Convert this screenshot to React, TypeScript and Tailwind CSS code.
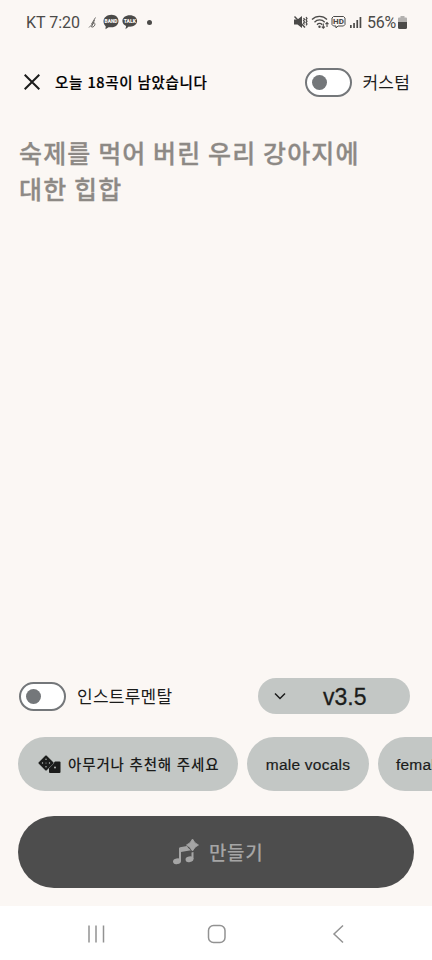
interface ToggleProps {
  label: string;
}

const korean = "font-['Noto_Sans_CJK_KR',sans-serif]";
const latin = "font-['Liberation_Sans','Noto_Sans_CJK_KR',sans-serif]";

function Toggle({ label }: ToggleProps) {
  return (
    <button
      aria-label={label}
      className="w-[47px] h-[29px] shrink-0 rounded-full border-2 border-[#74777a] bg-white flex items-center pl-[5px]"
    >
      <span className="size-[15px] rounded-full bg-[#74777a]" />
    </button>
  );
}

function StatusBar() {
  return (
    <div className="h-11 flex items-center justify-between pl-[26px] pr-[25px] font-['Roboto',sans-serif] text-[#4b4a48] text-base">
      <div className="flex items-center">
        <span className="w-[54px] pt-px whitespace-nowrap">KT 7:20</span>
        <svg className="ml-[8px]" width="10" height="16" viewBox="0 0 10 16" fill="none" stroke="currentColor" strokeWidth="0.8">
          <path d="M7.500 3.500 3.500 10M6.500 6 3.500 13c1.500.8 4-1.500 3.500-3.500C6.500 8.500 5 9 4 10.500M1 13.500l3.500-3.500" />
        </svg>
        <svg className="ml-[5px]" width="17" height="16" viewBox="0 0 17 16">
          <path d="M8.500.7C12.800.7 15.500 3.500 15.500 7s-2.700 6.300-7 6.300H5.500L2.500 15.300l.2-3.100C1.300 11 .5 9.500.5 7.300.5 3.500 4 .7 8.500.7z" fill="currentColor" />
          <text x="8" y="9.200" textAnchor="middle" fontSize="4.800" fontWeight="900" fill="#fbf7f4">BAND</text>
        </svg>
        <svg className="ml-[2px]" width="17" height="16" viewBox="0 0 17 16">
          <path d="M7.800 1.200c4.200 0 7.300 2.400 7.300 5.800s-3.100 5.700-7.300 5.700l-1-.1-3.300 2.600.6-3.300C1.800 11 .4 9.300.4 7c0-3.400 3.200-5.800 7.400-5.800z" fill="currentColor" />
          <text x="7.800" y="9" textAnchor="middle" fontSize="5" fontWeight="900" fill="#fbf7f4">TALK</text>
        </svg>
        <span className="ml-[8px] size-[5px] rounded-full bg-[#4b4a48]" />
      </div>

      <div className="flex items-center">
        <svg width="14" height="14" viewBox="0 0 14 14" fill="none" stroke="currentColor">
          <path d="M0 4.500h3.500L8 1v12L3.500 9.500H0z" fill="currentColor" stroke="none" />
          <path d="M.5 1.500l10.500 11" strokeWidth="1.400" />
          <path d="M9.500 3l1 1.300-1 1.300 1 1.300-1 1.300 1 1.300M12 2l1 1.400-1 1.400 1 1.400-1 1.400 1 1.400-1 1.400" strokeWidth="1.200" />
        </svg>
        <svg className="ml-[3px]" width="19" height="16" viewBox="0 0 19 16" fill="none" stroke="currentColor" strokeWidth="1.300">
          <path d="M1 5.500c4-4.300 11-4.300 15 0M3.500 8.200c2.800-3 7.500-3 10.200 0M6 10.700c1.600-1.700 3.600-1.700 5.200 0" />
          <circle cx="8.500" cy="12.800" r="1.200" fill="currentColor" stroke="none" />
          <path d="M12.300 9.500v4.800M10.800 12.700l1.500 1.600 1.500-1.600M16 13V8.500M14.500 10.200l1.500-1.700 1.500 1.700" strokeWidth="1.100" />
        </svg>
        <svg className="ml-px" width="15" height="14" viewBox="0 0 15 14">
          <path d="M2.500 1.500h10L14 3v6.500L12.500 11H7l-2 2v-2H2.500L1 9.500V3z" fill="none" stroke="currentColor" strokeWidth="1" />
          <text x="7.500" y="9.300" textAnchor="middle" fontSize="8" fontWeight="800" fill="currentColor">HD</text>
        </svg>
        <svg className="ml-[4px]" width="12" height="14" viewBox="0 0 12 14" fill="currentColor">
          <path d="M0 10h1.700v3H0zM3.200 8h1.700v5H3.200zM6.400 5h1.700v8H6.400zM9.600 2h1.700v11H9.600z" />
        </svg>
        <span className="ml-[5px] pt-px w-[29px] tracking-[-0.3px] whitespace-nowrap">56%</span>
        <svg className="ml-[2px]" width="9" height="13" viewBox="0 0 9 13">
          <path d="M2.500 0h4v1.500H8q1 0 1 1V6H0V2.500q0-1 1-1h1.500z" fill="#b3b1af" />
          <path d="M0 6h9v5.500Q9 13 7.500 13h-6Q0 13 0 11.500z" fill="currentColor" />
        </svg>
      </div>
    </div>
  );
}

function Dice() {
  return (
    <svg width="23" height="19" viewBox="0 0 23 19">
      <path d="M17 6.500h4.500a1 1 0 0 1 1 1V17a1 1 0 0 1-1 1h-9.500a1 1 0 0 1-1-1v-4z" fill="#1b1c1b" />
      <path d="M7.300.6q.7-.7 1.400 0l6.800 6.700q.7.700 0 1.400L8.700 15.400q-.7.700-1.400 0L.6 8.700q-.7-.7 0-1.400z" fill="#1b1c1b" stroke="#c3c7c5" strokeWidth="0.400" />
      <g fill="#c3c7c5">
        <circle cx="8" cy="4.300" r="0.700" />
        <circle cx="4.500" cy="8" r="0.700" />
        <circle cx="8" cy="8" r="0.500" />
        <circle cx="11.500" cy="8" r="0.700" />
        <circle cx="8" cy="11.700" r="0.700" />
        <circle cx="17" cy="12.500" r="0.900" />
      </g>
    </svg>
  );
}

function MusicSparkle() {
  return (
    <svg width="26" height="26" viewBox="0 0 26 26" fill="#a5a5a5">
      <ellipse cx="4" cy="22.300" rx="4" ry="2.800" transform="rotate(-12 4 22.300)" />
      <ellipse cx="16.500" cy="20.300" rx="4" ry="2.800" transform="rotate(-12 16.500 20.300)" />
      <path d="M6 22V9.500q0-1 1-1.200l7-1.300q1 2.500 4 4.300l-10 1.700v9zM18.500 13.500l2-.5v7h-2z" />
      <path d="M19.500 0Q21.300 4.200 25.500 6 21.300 7.800 19.500 12 17.700 7.800 13.500 6 17.700 4.200 19.500 0z" stroke="#a5a5a5" strokeWidth="0.800" strokeLinejoin="round" />
    </svg>
  );
}

export default function App() {
  return (
    <div className={`w-[432px] h-[960px] overflow-hidden flex flex-col bg-[#fbf7f4] text-[#1b1c1b] ${korean}`}>
      <StatusBar />

      <header className="h-[76px] flex items-center pl-6 pr-[22px]">
        <svg width="16" height="16" viewBox="0 0 16 16" fill="none" stroke="#1b1c1b" strokeWidth="2">
          <path d="M.7.700l14.600 14.600M15.300.700.700 15.300" />
        </svg>
        <span className="ml-[15px] text-[14.5px] tracking-[0.65px] [word-spacing:0.5px] font-medium text-black [-webkit-text-stroke:0.2px] whitespace-nowrap">
          오늘 18곡이 남았습니다
        </span>
        <div className="ml-auto flex items-center gap-[10px]">
          <Toggle label="커스텀" />
          <span className="text-[17px] tracking-[0.2px] whitespace-nowrap">커스텀</span>
        </div>
      </header>

      <main className="flex-1 pl-[19px] pt-[14px]">
        <p className="text-[25px] leading-9 tracking-[1.15px] [word-spacing:-0.1px] font-medium text-[#8d8985] [-webkit-text-stroke:0.3px]">
          숙제를 먹어 버린 우리 강아지에
          <br />
          대한 힙합
        </p>
      </main>

      <div className="flex items-center justify-between pl-[19px] pr-[22px] h-9">
        <div className="flex items-center gap-[11px]">
          <Toggle label="인스트루멘탈" />
          <span className="text-[17px] tracking-[0.25px] whitespace-nowrap">인스트루멘탈</span>
        </div>
        <button className="w-[152px] h-9 rounded-full bg-[#c3c7c5] flex items-center pl-4">
          <svg width="12" height="8" viewBox="0 0 12 8" fill="none" stroke="#1b1c1b" strokeWidth="1.500">
            <path d="M1 1.500l5 5 5-5" />
          </svg>
          <span className={`ml-[37px] pt-[3px] text-[23px] [-webkit-text-stroke:0.3px] ${latin}`}>v3.5</span>
        </button>
      </div>

      <div className="mt-[23px] pl-[18px] flex gap-[9px]">
        <button className="w-[220px] h-[54px] shrink-0 rounded-full bg-[#c3c7c5] flex items-center pl-5 gap-[7px]">
          <Dice />
          <span className="text-[14.5px] tracking-[0.85px] [word-spacing:0.6px] font-medium whitespace-nowrap">
            아무거나 추천해 주세요
          </span>
        </button>
        <button className={`w-[122px] h-[54px] shrink-0 rounded-full bg-[#c3c7c5] pt-[2px] text-[15.5px] tracking-[0.22px] [-webkit-text-stroke:0.2px] ${latin}`}>
          male vocals
        </button>
        <button className={`w-[138px] h-[54px] shrink-0 rounded-full bg-[#c3c7c5] pt-[2px] text-[15.5px] tracking-[0.22px] text-left pl-[18px] [-webkit-text-stroke:0.2px] ${latin}`}>
          female vocals
        </button>
      </div>

      <button className="mt-[25px] ml-[18px] mb-[18px] w-[396px] h-[72px] shrink-0 rounded-full bg-[#4d4d4d] flex items-center pl-[155px] gap-[10px] text-[#a5a5a5]">
        <MusicSparkle />
        <span className="text-[19px] tracking-[0.6px] font-medium whitespace-nowrap">만들기</span>
      </button>

      <nav className="h-[54px] shrink-0 bg-white">
        <svg width="432" height="54" viewBox="0 0 432 54" fill="none" stroke="#929292" strokeWidth="1.500">
          <path d="M89 19.500v17M96 19.500v17M103.500 19.500v17" />
          <rect x="208.500" y="19.500" width="16.500" height="17" rx="5" />
          <path d="M343 19.500l-9 8.500 9 8.500" />
        </svg>
      </nav>
    </div>
  );
}
